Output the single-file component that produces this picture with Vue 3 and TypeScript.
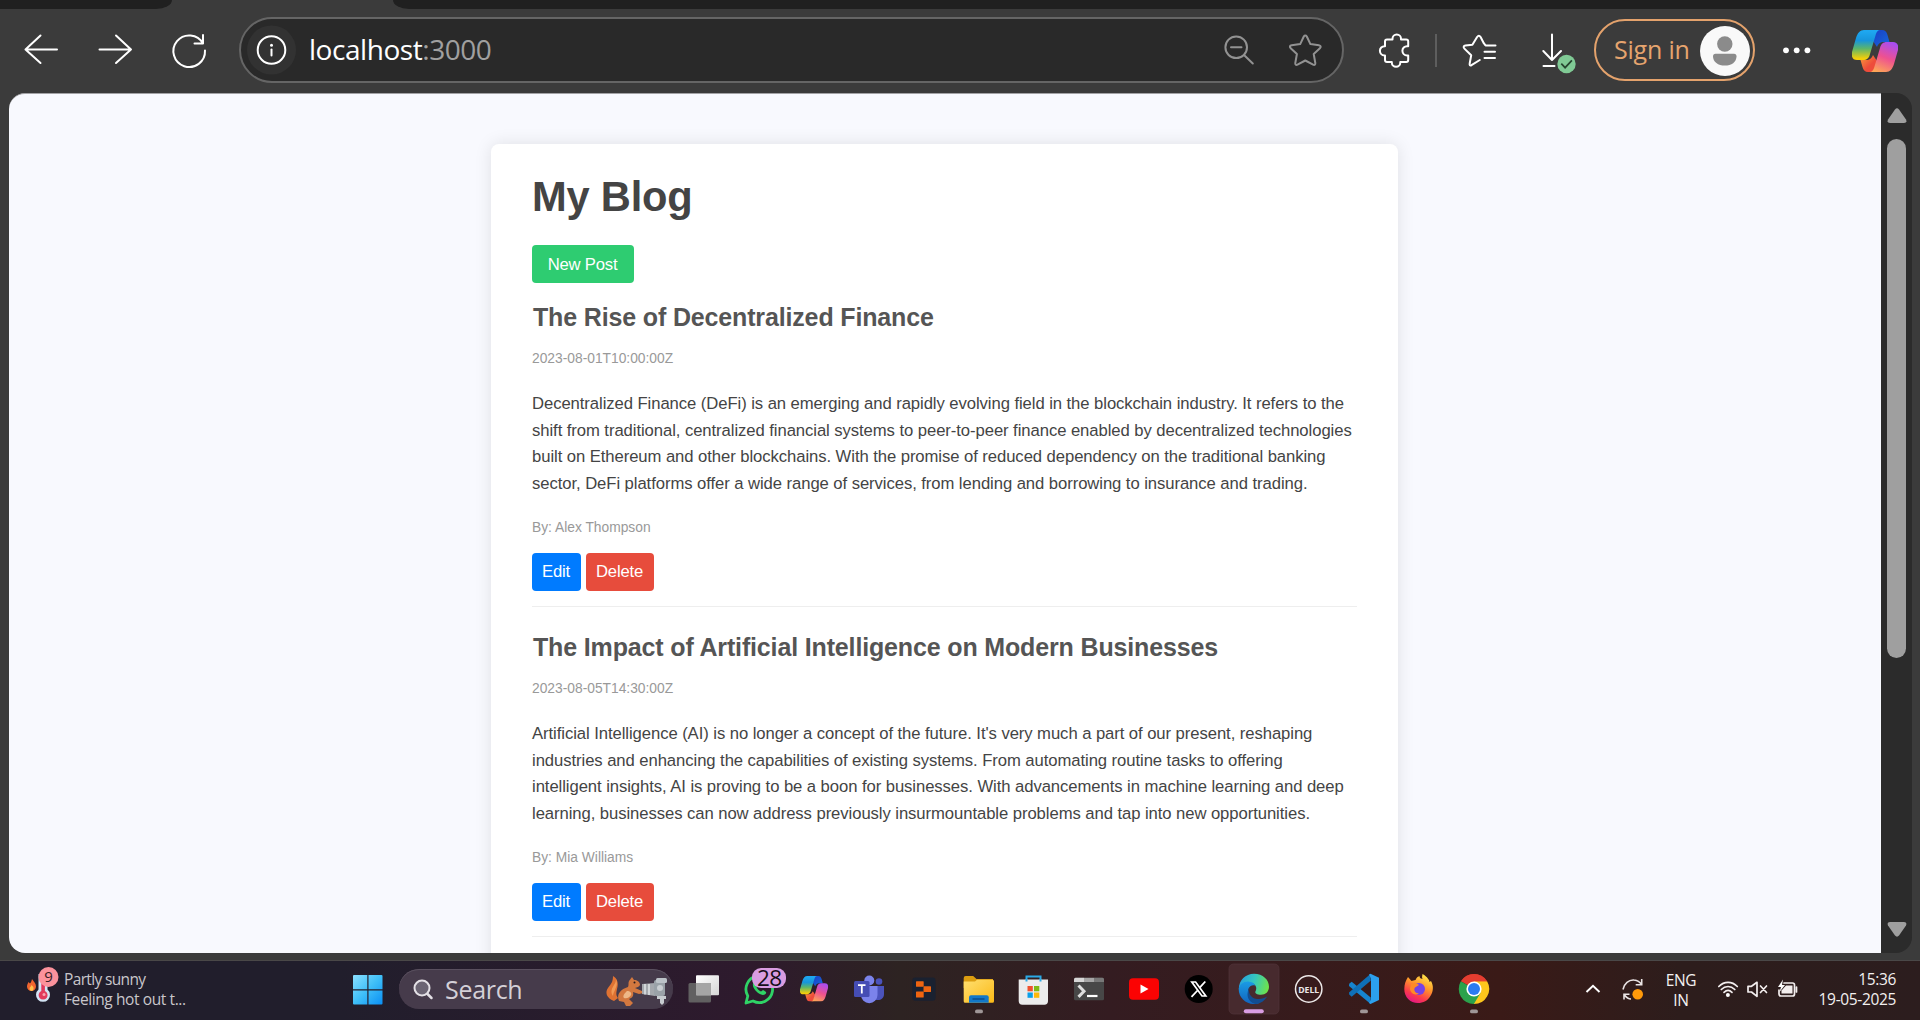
<script setup lang="ts">
interface Post {
  id: number
  title: string
  date: string
  lines: string[]
  author: string
}

const posts: Post[] = [
  {
    id: 1,
    title: 'The Rise of Decentralized Finance',
    date: '2023-08-01T10:00:00Z',
    lines: [
      'Decentralized Finance (DeFi) is an emerging and rapidly evolving field in the blockchain industry. It refers to the',
      'shift from traditional, centralized financial systems to peer-to-peer finance enabled by decentralized technologies',
      'built on Ethereum and other blockchains. With the promise of reduced dependency on the traditional banking',
      'sector, DeFi platforms offer a wide range of services, from lending and borrowing to insurance and trading.',
    ],
    author: 'Alex Thompson',
  },
  {
    id: 2,
    title: 'The Impact of Artificial Intelligence on Modern Businesses',
    date: '2023-08-05T14:30:00Z',
    lines: [
      "Artificial Intelligence (AI) is no longer a concept of the future. It's very much a part of our present, reshaping",
      'industries and enhancing the capabilities of existing systems. From automating routine tasks to offering',
      'intelligent insights, AI is proving to be a boon for businesses. With advancements in machine learning and deep',
      'learning, businesses can now address previously insurmountable problems and tap into new opportunities.',
    ],
    author: 'Mia Williams',
  },
]
</script>

<template>
  <div class="desktop">
    <svg class="defs" width="0" height="0" aria-hidden="true">
      <defs>
        <linearGradient id="cpA" x1="0" y1="0" x2="0" y2="1">
          <stop offset="0.05" stop-color="#1ea7f0" /><stop offset="0.35" stop-color="#1795dc" />
          <stop offset="0.62" stop-color="#5cb56a" /><stop offset="0.95" stop-color="#f3cf0a" />
        </linearGradient>
        <linearGradient id="cpB" x1="0.7" y1="0" x2="0.3" y2="1">
          <stop offset="0" stop-color="#a94df0" /><stop offset="0.5" stop-color="#ee5190" />
          <stop offset="1" stop-color="#fda657" />
        </linearGradient>
        <linearGradient id="cpC" x1="0" y1="0" x2="1" y2="1">
          <stop offset="0" stop-color="#1a3fc4" /><stop offset="1" stop-color="#1668dd" />
        </linearGradient>
        <linearGradient id="cpD" x1="0" y1="0" x2="1" y2="1">
          <stop offset="0" stop-color="#f9a03a" /><stop offset="0.6" stop-color="#ee4c3b" />
        </linearGradient>
        <symbol id="copilot" viewBox="0 0 46 42">
          <path d="M24 0h6c3 0 4.500 1.500 5.500 5l2 7H32c-4 0-5.500 1.500-7 5l-4-6z" fill="url(#cpC)" />
          <path d="M22 42h-6c-3 0-4.500-1.500-5.500-5l-2-7H14c4 0 5.500-1.500 7-5l4 6z" fill="url(#cpD)" />
          <path d="M12 0h17c-3.500 0-4.500 2-5.500 5.500L18 24c-1 4-3 6-7 6H5c-4 0-6-3-5-8L4 8C5.500 3 8 0 12 0z" fill="url(#cpA)" />
          <path d="M34 42H17c3.500 0 4.500-2 5.500-5.500L28 18c1-4 3-6 7-6h6c4 0 6 3 5 8l-4 14c-1.500 5-4 8-8 8z" fill="url(#cpB)" />
        </symbol>
      </defs>
    </svg>

    <div class="tabs">
      <div class="tab first"></div>
      <div class="tab rest"></div>
    </div>

    <header class="toolbar">
      <svg class="nav" width="239" height="84" viewBox="0 9 239 84">
        <g fill="none" stroke="#fff" stroke-width="2" stroke-linecap="round" stroke-linejoin="round">
          <path d="M57 49.500H25.500M40.500 35.500l-15 14 15 13.500" />
          <path d="M99.500 49.500H131M116 35.500l15 14-15 13.500" />
          <path d="M203 43.500A15.800 15.800 0 1 0 205 50.500M203 35v8.500h-8.500" />
        </g>
      </svg>
      <div class="address">
        <svg width="68" height="62" viewBox="241 19 68 62">
          <circle cx="271.500" cy="50" r="24.500" fill="#323232" />
          <circle cx="271.500" cy="50" r="13.800" fill="none" stroke="#fff" stroke-width="2" />
          <path d="M271.500 49.500v6" stroke="#fff" stroke-width="2" stroke-linecap="round" />
          <circle cx="271.500" cy="45.200" r="1.500" fill="#fff" />
        </svg>
        <div class="url">localhost<span>:3000</span></div>
        <svg class="end" width="124" height="62" viewBox="1218 19 124 62">
          <g fill="none" stroke="#929292" stroke-width="2" stroke-linecap="round" stroke-linejoin="round">
            <circle cx="1236.200" cy="47.300" r="10.800" />
            <path d="M1231 47.300h10.500M1244 55l8.800 8.500" />
            <path d="M1305.300 35.500c.8 0 1.200.5 1.500 1l3.600 7.600 8.500 1.100c2 .3 2.300 1.800 1 3l-6.200 5.800 1.600 9c.3 1.700-.8 2.400-2.200 1.700l-7.800-4.200-7.800 4.200c-1.400.7-2.500 0-2.200-1.700l1.600-9-6.200-5.800c-1.300-1.200-1-2.700 1-3l8.500-1.100 3.600-7.600c.3-.5.700-1 1.500-1z" />
          </g>
        </svg>
      </div>
      <svg width="250" height="84" viewBox="1344 9 250 84">
        <g fill="none" stroke="#fff" stroke-width="2" stroke-linecap="round" stroke-linejoin="round">
          <path d="M1385 41.500q0-2 2-2h5.500v-.800a4.200 4.200 0 0 1 8.500 0v.800h5.200q2 0 2 2v4.700h-1.200a4.200 4.200 0 0 0 0 9.200h1.200v4.700q0 2-2 2h-5.900v.400a4.200 4.200 0 0 1-8.500 0v-.400h-4.800q-2 0-2-2v-4.700h-.500a4.300 4.300 0 0 1 0-9.200h.500z" />
          <path d="M1479.800 60l-8.300 5.200q-2.300.8-1.800-1.700l1.500-8.200-6.800-6.700c-1.300-1.300-.800-2.800 1-3l7-.8 4.700-7.800q1.800-2.500 3.500 0l3.200 6.200 1.700 2.200h10M1484.500 51.800h10.500M1484.500 58h10.500" />
          <path d="M1552 34.500v25M1543.300 51l8.700 9 9-9M1543.500 66h11" />
        </g>
        <path d="M1436 34v33" stroke="#686868" stroke-width="1.600" />
        <circle cx="1566.500" cy="64" r="9.200" fill="#80ca95" />
        <path d="M1561.300 63.700l3.800 4 6.800-7.300" fill="none" stroke="#26452f" stroke-width="1.700" />
      </svg>
      <div class="signin">
        <span>Sign in</span>
        <svg width="50" height="50" viewBox="0 0 50 50">
          <circle cx="25" cy="25" r="25" fill="#f9f9f9" />
          <circle cx="24.800" cy="18" r="7.700" fill="#8b8b8b" />
          <path d="M15.500 27.700h18.500a2.500 2.500 0 0 1 2.500 2.500c0 6-5 9.300-11.700 9.300S13 36 13 30.200a2.500 2.500 0 0 1 2.500-2.500z" fill="#8b8b8b" />
        </svg>
      </div>
      <svg width="165" height="84" viewBox="1755 9 165 84">
        <g fill="#fff"><circle cx="1786" cy="50.300" r="2.900" /><circle cx="1796.700" cy="50.300" r="2.900" /><circle cx="1807.400" cy="50.300" r="2.900" /></g>
        <use href="#copilot" x="1852" y="30" width="46" height="42" />
      </svg>
    </header>

    <div class="viewport">
      <main class="page">
        <div class="card">
          <h1>My Blog</h1>
          <button class="btn new">New Post</button>
          <article v-for="p in posts" :key="p.id" class="post">
            <h2>{{ p.title }}</h2>
            <div class="small">{{ p.date }}</div>
            <p><span v-for="(l, i) in p.lines" :key="i">{{ l }}</span></p>
            <div class="small by">By: {{ p.author }}</div>
            <div class="actions">
              <button class="btn edit">Edit</button>
              <button class="btn del">Delete</button>
            </div>
          </article>
        </div>
      </main>
      <div class="scrollbar">
        <svg width="20" height="16" viewBox="0 0 20 16"><path d="M8 1.500q2-2.300 4 0l7 10q1.400 3.500-2 3.500H3q-3.400 0-2-3.500z" fill="#9f9f9f" /></svg>
        <div class="thumb"></div>
        <svg class="down" width="20" height="16" viewBox="0 0 20 16"><path d="M8 14.500q2 2.300 4 0l7-10Q20.400 1 17 1H3Q-.4 1 1 4.500z" fill="#9f9f9f" /></svg>
      </div>
    </div>

    <footer class="taskbar">
      <svg width="64" height="60" viewBox="0 0 64 60">
        <path d="M32 19c2 3 4 4.500 4 7.500a4.500 4.500 0 0 1-9 0c0-2 1-3 1.500-4.500l1.500 1.500c1-1 1.500-2.500 2-4.500z" fill="#f0652f" />
        <path d="M31.500 25c1.500 1.500 2.500 2.500 2 4a2 2 0 0 1-4-.2c0-1.500 1.500-2 2-3.800z" fill="#ffc04a" />
        <path d="M38.500 14h9v15.500a7 7 0 1 1-9 0z" fill="#d3e4f4" />
        <path d="M41.300 20h3.600v11a4.500 4.500 0 1 1-3.600 0z" fill="#e23a5c" />
        <circle cx="44" cy="34.500" r="1.500" fill="#f9a4b0" />
        <circle cx="48.500" cy="17" r="10" fill="#fb929c" />
        <text x="48.500" y="22.300" text-anchor="middle" font-size="15" fill="#3a2024">9</text>
      </svg>
      <div class="weather"><div>Partly sunny</div><div class="sub">Feeling hot out t...</div></div>
      <svg class="start" width="30" height="30" viewBox="0 0 30 30">
        <defs><linearGradient id="win" x1="0" y1="0" x2="1" y2="1"><stop offset="0" stop-color="#8be0ff" /><stop offset=".5" stop-color="#3fbff8" /><stop offset="1" stop-color="#0a8ff4" /></linearGradient></defs>
        <path d="M1 0h13.300v14.300H0V1a1 1 0 0 1 1-1zm14.500 0H28.500a1 1 0 0 1 1 1v13.300h-14zM0 15.500h14.300v14H1a1 1 0 0 1-1-1zm15.500 0h14v13a1 1 0 0 1-1 1h-13z" fill="url(#win)" />
      </svg>
      <div class="search">
        <svg width="46" height="40" viewBox="399 9 46 40"><circle cx="422" cy="28" r="7.500" fill="#6b6473" stroke="#e4e1e6" stroke-width="2" /><path d="M427.500 34l4 4" stroke="#e4e1e6" stroke-width="2.500" stroke-linecap="round" /></svg>
        <span>Search</span>
        <svg class="pic" width="70" height="40" viewBox="603 9 70 40">
          <path d="M614 41c-8-3-9-9-6-13 3-4 5-6 5-12 4 2 6 7 4 13-1 5-1 6 1 9z" fill="#df7232" />
          <path d="M613 36c-3-4-1-8 1-11 1-2 2-3 2-6 2 5 0 8-1 11-1 2-2 4-2 6z" fill="#f29a55" />
          <path d="M619 41c-3-7 2-12 9-14 1-2 0-4 1-6l3-4 2 3c3-.5 6 2 6 5-1 2-3 2-5 3l7 3 1 2-4 1-6-2c1 4-1 6-4 7l4 4-3 3h-4l-2-4z" fill="#d3783f" />
          <path d="M627 31c3 0 5 2 4 4s-4 4-7 3c-2-2 1-5 3-7z" fill="#eeb887" />
          <circle cx="634.500" cy="22.500" r="1" fill="#2a1b1b" />
          <path d="M642 24l13-1v13l-13-2z" fill="#a4a8ad" /><path d="M645 24v10.500M649 24v11" stroke="#dfe3e6" stroke-width="1.500" />
          <rect x="654" y="20" width="11" height="16" rx="2" fill="#9aa2a8" /><rect x="656" y="18" width="11" height="5" rx="1.500" fill="#bcc3c8" />
          <path d="M657 36h9v3h-2v4l-2 2-2-2v-4h-3z" fill="#c7ccd0" /><circle cx="660" cy="28" r="3" fill="#c9ced2" />
        </svg>
      </div>
      <div class="apps">
        <svg viewBox="0 0 55 60">
          <defs><linearGradient id="tv" x1="0" y1="0" x2="1" y2="1"><stop offset="0" stop-color="#fff" /><stop offset="1" stop-color="#d5d5d5" /></linearGradient></defs>
          <rect x="12.500" y="23" width="22.500" height="19.500" rx="1.500" fill="#616061" /><rect x="20" y="15.300" width="23" height="20" rx="1" fill="url(#tv)" /><path d="M20 23h15v12.300H20z" fill="#a5a5a5" />
        </svg>
        <svg viewBox="0 0 55 60">
          <path d="M15 43l1.800-7a13.300 13.300 0 1 1 5.200 5z" fill="none" stroke="#2fd366" stroke-width="2.800" stroke-linejoin="round" />
          <path d="M22.500 22.500c-2 3 1 7 3 9s6 5 9 2.500c1.500-1.500.5-2.500-2.500-4l-2 1.500c-2-1-3.500-2.500-4.500-4.500l1.500-1.500-1.500-3.500z" fill="#2fd366" />
          <rect x="21" y="8" width="34" height="20" rx="9" fill="#d99de2" /><text x="38.500" y="26" text-anchor="middle" font-size="22.500" textLength="25" fill="#17101a">28</text>
        </svg>
        <svg viewBox="0 0 55 60"><use href="#copilot" x="14" y="16" width="28" height="25.500" /></svg>
        <svg viewBox="0 0 55 60">
          <circle cx="38" cy="21.500" r="3.300" fill="#4b53bc" /><path d="M33 26h10v8c0 4-3 6-6 6h-4z" fill="#4b53bc" />
          <circle cx="28.300" cy="20.500" r="5" fill="#7b83eb" /><path d="M20 26h16.500v9a8 8 0 0 1-16.500 0z" fill="#7b83eb" />
          <rect x="13" y="21" width="15.500" height="16" rx="1.500" fill="#454db4" /><path d="M17 25.200h7.500M20.800 25.200v8.300" stroke="#fff" stroke-width="1.800" />
        </svg>
        <svg viewBox="0 0 55 60"><rect x="16.300" y="17.500" width="23.300" height="23.300" rx="3" fill="#1a2130" /><g fill="#ee6410"><rect x="20" y="21.300" width="7.700" height="5.500" rx=".6" /><rect x="27.500" y="26.300" width="7.500" height="5.700" rx=".6" /><rect x="20" y="31.500" width="7.700" height="6" rx=".6" /></g></svg>
        <svg viewBox="0 0 55 60">
          <defs><linearGradient id="fo" x1="0" y1="0" x2="1" y2="1"><stop offset="0" stop-color="#ffdf70" /><stop offset="1" stop-color="#fbb916" /></linearGradient></defs>
          <path d="M12.700 18q0-2 2-2h7.500l3.300 3H42v9H12.700z" fill="#dc9d10" /><path d="M12.700 21.500H24l2-1.800h15.500q1.500 0 1.500 1.500v20q0 1.500-1.500 1.500H14.200q-1.500 0-1.500-1.500z" fill="url(#fo)" />
          <path d="M18 42.700v-5.500q0-2 2-2h15.700q2 0 2 2v5.500z" fill="#1278c8" /><path d="M21.500 39h12" stroke="#0a4d8c" stroke-width="1.500" /><rect class="dot" x="24" y="49.500" width="8" height="3.800" rx="1.900" />
        </svg>
        <svg viewBox="0 0 55 60">
          <path d="M20.500 21v-4.500h14V21" fill="none" stroke="#2ba9e6" stroke-width="2" /><path d="M12.700 19.500H42V41q0 3.700-3.700 3.700H16.400q-3.700 0-3.700-3.700z" fill="#ececec" /><path d="M20.500 19v2.500M34.500 19v2.500" stroke="#2ba9e6" stroke-width="2" />
          <path d="M21.500 26h5.300v5.300h-5.300z" fill="#f0502d" /><path d="M28 26h5.300v5.300H28z" fill="#80b914" /><path d="M21.500 32.500h5.300v5.300h-5.300z" fill="#0aa0ea" /><path d="M28 32.500h5.300v5.300H28z" fill="#fdb90c" />
        </svg>
        <svg viewBox="0 0 55 60"><rect x="13" y="17.800" width="30" height="22.500" rx="1.500" fill="#474747" /><path d="M13 22v-2.700q0-1.500 1.500-1.500H23V22z" fill="#d6d6d6" /><path d="M23 17.800h10V22H23z" fill="#a5a5a5" /><path d="M33 17.800h8.500q1.500 0 1.500 1.500V22H33z" fill="#787878" /><path d="M17.500 25.500l5.500 5.700-5.500 5.700" fill="none" stroke="#dedede" stroke-width="3" /><path d="M26 36h10.500" stroke="#fff" stroke-width="2.200" /></svg>
        <svg viewBox="0 0 55 60"><rect x="13" y="18.300" width="30" height="21.400" rx="4" fill="#fb0303" /><path d="M24.500 24.500l8 4.500-8 4.500z" fill="#fff" /></svg>
        <svg viewBox="0 0 55 60"><circle cx="27.700" cy="29" r="14" fill="#000" /><path d="M20.800 22h3.800l10.200 14h-3.800z" fill="none" stroke="#fff" stroke-width="1.700" /><path d="M34.300 21.500l-5.800 6.400M26.500 30.500l-6 6.300" stroke="#fff" stroke-width="1.800" /></svg>
        <svg viewBox="0 0 55 60">
          <defs>
            <linearGradient id="ed1" x1="0" y1=".3" x2="1" y2=".5"><stop offset="0" stop-color="#269fe0" /><stop offset=".5" stop-color="#35c7bf" /><stop offset="1" stop-color="#6ee24b" /></linearGradient>
            <linearGradient id="ed2" x1="0" y1="0" x2="0" y2="1"><stop offset="0" stop-color="#1a9be5" /><stop offset="1" stop-color="#1264bd" /></linearGradient>
          </defs>
          <rect x="3" y="4" width="50" height="50" rx="4.500" fill="#472a2e" stroke="#50343a" stroke-width=".7" />
          <path d="M12.800 29C13 20 19.500 13.700 28 13.700c9 0 15 6 15 13 0 5-3.500 8-8 8-4 0-6.500-1.500-5.500-3.500 2-3.500 0-7.500-4-8-6-.5-11 2-12.700 5.800z" fill="url(#ed1)" />
          <path d="M12.700 29c1-5 5.500-8 10.500-7.300 4 .5 5.500 2.300 6.300 4-5-2-9 3-7 9 2 6 7 8.300 11 8.300-2 .8-4 1.200-6 1A15 15 0 0 1 12.700 29z" fill="url(#ed2)" />
          <path d="M24 27c-2.500 5 0 11 7 12 4 .5 7.500-1 10-2.500-2 4-6.500 7.200-11 7.500-7-1-11.500-9-6-17z" fill="#124d91" />
          <rect x="17.800" y="49.300" width="20" height="4" rx="2" fill="#d99de2" />
        </svg>
        <svg viewBox="0 0 55 60"><circle cx="27.700" cy="29" r="13.200" fill="none" stroke="#ece8e8" stroke-width="1.500" /><text x="27.700" y="32.700" text-anchor="middle" font-size="9.500" font-weight="700" textLength="21" lengthAdjust="spacingAndGlyphs" fill="#ece8e8">DELL</text></svg>
        <svg viewBox="0 0 55 60"><path d="M13.200 23.700l2.500-2 19 15.800v6.500L13 26z" fill="#1684cf" /><path d="M13.200 34.500l2.500 2.200 19-16v-7L13 32.500z" fill="#0f70b8" /><path d="M34.500 13.700l8.500 4V40l-8.500 4-1.500-1 2-3.500V18.500l-2-4z" fill="#2ca0ee" /><rect class="dot" x="24" y="49.500" width="8" height="3.800" rx="1.900" /></svg>
        <svg viewBox="0 0 55 60">
          <defs><linearGradient id="ff" x1=".8" y1="0" x2=".3" y2="1"><stop offset="0" stop-color="#fff04d" /><stop offset=".4" stop-color="#ff9a2b" /><stop offset=".75" stop-color="#fb3a4c" /><stop offset="1" stop-color="#e31587" /></linearGradient></defs>
          <path d="M17 17l3.500 4 4-1c1-3 3-3.500 4-4 0 1.500.5 2.500 3 3-1-2 0-4 0-5 5 3 7 6 7 8l1.500-1c3 5 2 11 0 14-3 6-8 8-13 8-8 0-13.700-6-13.700-14 0-5 1.700-9 3.700-12z" fill="url(#ff)" />
          <circle cx="28" cy="29" r="6" fill="#7542e5" /><path d="M20 24c3-1.500 6-1 8 1l-4 2.500c-2 3 1 6 4 6-4 2.500-9-.5-9-5z" fill="#ff8a26" />
        </svg>
        <svg viewBox="0 0 55 60">
          <path d="M28 28.900L15 21.300A15.200 15.200 0 0 1 41 21.300z" fill="#e43d30" /><path d="M28 28.900V21.300H41.100A15.200 15.200 0 0 1 27.900 44.100z" fill="#fdc61c" /><path d="M28 28.900l6.600 3.800-6.700 11.400A15.200 15.200 0 0 1 14.800 21.300z" fill="#2ba24c" />
          <path d="M15 21.300A15.200 15.200 0 0 1 41.100 21.300H28z" fill="#e43d30" />
          <circle cx="28" cy="29" r="7.600" fill="#fff" /><circle cx="28" cy="29" r="6" fill="#2b7bf0" /><rect class="dot" x="24" y="49.500" width="8" height="3.800" rx="1.900" />
        </svg>
      </div>
      <svg class="tray" width="86" height="60" viewBox="1570 0 86 60">
        <path d="M1586.500 32l6.500-6.300 6.500 6.300" fill="none" stroke="#fff" stroke-width="1.900" />
        <g fill="none" stroke="#e9e3e3" stroke-width="1.600"><path d="M1623 29.500c1-6 6-10 11-9.500 4 .3 6 2 7.500 4.500M1641.700 19v5.800h-6M1631 39c-3 0-5-2-6.500-4M1624 39.500v-5.300h5.500" /></g>
        <circle cx="1637.700" cy="34.300" r="5.300" fill="#ff9a0a" />
      </svg>
      <div class="lang"><div>ENG</div><div>IN</div></div>
      <svg width="100" height="60" viewBox="1706 0 100 60">
        <g fill="none" stroke="#f3eeee" stroke-width="1.700" stroke-linecap="round" stroke-linejoin="round">
          <path d="M1718.800 26.500c5.300-5.500 13.200-5.500 18.500 0M1721.300 29.500c4-4 9.500-4 13.500 0M1724 32.300c2.500-2.300 5.600-2.300 8 0" />
          <path d="M1748 26.300h3.500l5.500-4v14l-5.500-4.300h-3.500zM1760.500 26l6 6.500M1766.500 26l-6 6.500" />
          <path d="M1784 23h8.500q2 0 2 2v9q0 2-2 2H1781q-2 0-2-2v-4M1796.500 27v5" />
        </g>
        <circle cx="1727.900" cy="35" r="2" fill="#fff" /><path d="M1786 25.500h6.500v8H1781.500v-3z" fill="#f3eeee" /><path d="M1783 19.500l-5 7.500h3l-1.500 5 5.500-7h-3z" fill="#fff" />
      </svg>
      <div class="clock"><div>15:36</div><div>19-05-2025</div></div>
    </footer>
  </div>
</template>

<style>
body { background: #3b3b3b; overflow: hidden; }
</style>

<style scoped>
.desktop { width: 1920px; height: 1020px; display: flex; flex-direction: column; overflow: hidden; background: #3b3b3b; font-family: "Open Sans", "Noto Sans", sans-serif; }
.defs { position: absolute; }
svg { display: block; flex: none; }
.tabs { height: 9px; flex: none; display: flex; gap: 221px; }
.tab { background: #202020; }
.tab.first { width: 172px; border-bottom-right-radius: 16px 9px; }
.tab.rest { flex: 1; border-bottom-left-radius: 16px 9px; }
.toolbar { height: 84px; flex: none; display: flex; }
.address { width: 1105px; height: 66px; margin-top: 8px; box-sizing: border-box; display: flex; align-items: center; border: 2px solid #656565; border-radius: 33px; background: #292929; }
.url { padding-bottom: 2px; color: #fff; font-size: 28px; letter-spacing: -0.45px; white-space: nowrap; }
.url span { color: #a0a0a0; }
.end { margin-left: auto; }
.signin { width: 161px; height: 62px; margin-top: 10px; box-sizing: border-box; border: 2px solid #e4a26c; border-radius: 31px; display: flex; align-items: center; justify-content: space-between; padding: 2px 3px 0 18px; color: #e6a46e; font-size: 25px; letter-spacing: -0.2px; white-space: nowrap; }
.signin span { padding-bottom: 4px; }
.viewport { height: 860px; flex: none; margin: 0 8px 0 9px; display: flex; box-sizing: border-box; }
.page { width: 1872px; box-sizing: border-box; border-top: 1px solid #a3a3a6; border-radius: 16px 0 0 16px; background: #f8f9fe; overflow: hidden; padding: 50px 0 0 482px; color: #444; font-family: "Liberation Sans", Arial, sans-serif; }
.card { width: 907px; height: 900px; box-sizing: border-box; padding: 28px 41px 0; background: #fff; border-radius: 8px; box-shadow: 0 0 17px rgba(0, 0, 0, 0.1); }
h1 { margin: 0; height: 73px; font-size: 41.67px; line-height: 50px; color: #444; letter-spacing: -0.2px; }
.btn { display: block; height: 38px; padding: 1px 1px 0 0; border: 0; border-radius: 4px; color: #fff; font: 16.67px "Liberation Sans", Arial, sans-serif; letter-spacing: -0.2px; }
.new { width: 102px; background: #2ecc71; }
.edit { width: 49px; background: #007bff; }
.del { width: 68px; background: #e74c3c; }
.post { height: 330px; box-sizing: border-box; padding-top: 25px; border-bottom: 1px solid #eee; white-space: nowrap; }
.new + .post { height: 324px; padding-top: 19px; }
h2 { margin: 0; padding-left: 1px; font-size: 25px; line-height: 30px; color: #555; letter-spacing: -0.15px; }
.small { height: 20px; margin-top: 17px; font-size: 13.8px; line-height: 20px; color: #999; }
p { margin: 22px 0 20px; font-size: 16.67px; line-height: 26.67px; letter-spacing: -0.07px; }
p span { display: block; }
.small.by { margin-top: 0; }
.actions { display: flex; gap: 5px; margin-top: 15px; }
.scrollbar { width: 31px; background: #2b2b2b; border-radius: 0 16px 16px 0; display: flex; flex-direction: column; align-items: center; padding: 15px 0 16px; box-sizing: border-box; }
.thumb { width: 19px; height: 519px; margin-top: 15px; border-radius: 10px; background: #9f9f9f; }
.down { margin-top: auto; }
.taskbar { height: 60px; flex: none; margin-top: 7px; display: flex; background: linear-gradient(90deg, #211e2c 0, #211e2c 340px, #2e1a2d 750px, #2d2322 900px, #341c21 1110px, #3a1a17 1500px, #2d1d1c 1680px, #2c1d1e 1920px); color: #f3f0f0; border-top: 1px solid #4a4848; box-sizing: border-box; }
.taskbar > * { margin-top: -1px; }
.weather { width: 289px; padding-top: 9px; font-size: 15.5px; line-height: 20px; color: #c9c6cb; white-space: nowrap; box-sizing: border-box; letter-spacing: -0.65px; }
.sub { letter-spacing: -0.4px; }
.taskbar > .start { margin: 14px 17px 0 0; }
.taskbar > .search { width: 274px; height: 40px; margin: 8px 3px 0 -1px; display: flex; align-items: center; border-radius: 20px; background: #463b4b; box-shadow: inset 0 1px #5a505f; font-size: 25px; letter-spacing: -0.3px; color: #d4d0d7; }
.pic { margin-left: auto; }
.apps { display: flex; }
.apps svg { width: 55px; height: 60px; }
.dot { fill: #9f9697; }
.tray { margin-left: 69px; }
.lang { width: 50px; padding-top: 10px; text-align: center; font-size: 15.5px; line-height: 20px; letter-spacing: -0.3px; }
.clock { width: 90px; padding-top: 9px; text-align: right; font-size: 15.5px; line-height: 20px; letter-spacing: -0.35px; white-space: nowrap; }
</style>
